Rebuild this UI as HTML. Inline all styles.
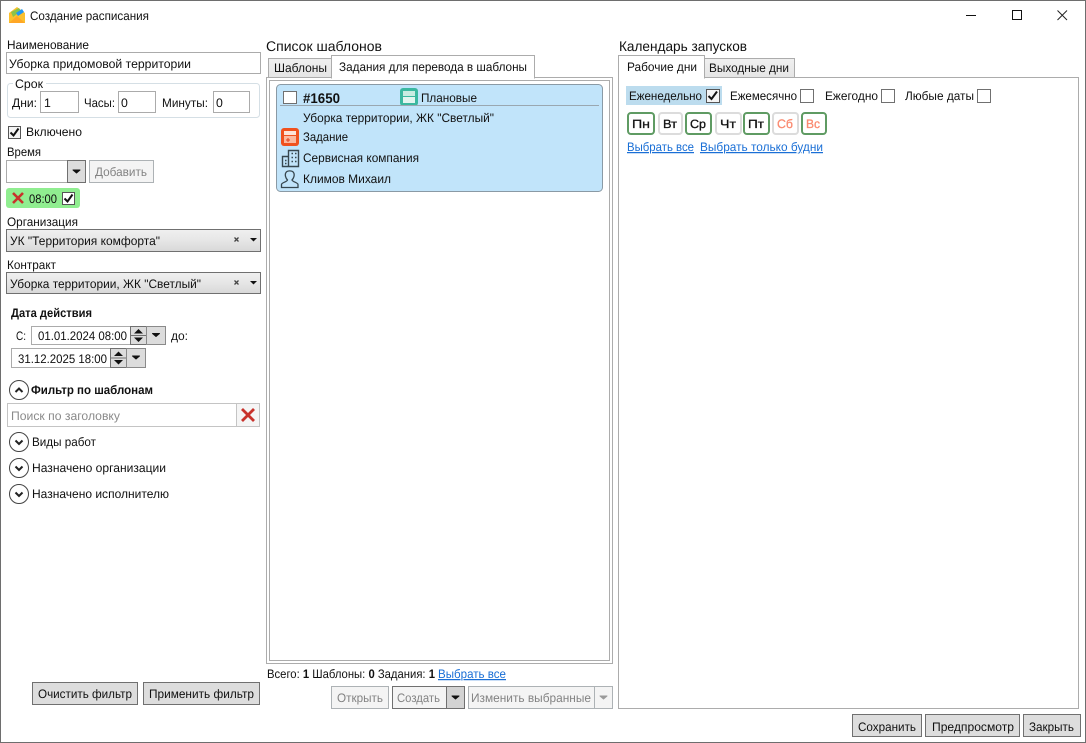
<!DOCTYPE html>
<html lang="ru"><head><meta charset="utf-8"><title>Создание расписания</title>
<style>
html,body{margin:0;padding:0;background:#fff;width:1086px;height:743px;overflow:hidden}
svg{display:block}
text{font-family:"Liberation Sans",sans-serif;font-size:12.3px;fill:#111;white-space:pre}
.h{font-size:14px}
.b{font-weight:bold}
.dis{fill:#838383}
.ph{fill:#8a8a8a}
.lnk{fill:#1a6fd6;text-decoration:underline}
.sal{fill:#fa8a70;stroke:#fa8a70;stroke-width:.3}
.day{font-size:12px;fill:#111;stroke:#111;stroke-width:.3}
</style></head><body>
<svg width="1086" height="743" viewBox="0 0 1086 743" xmlns="http://www.w3.org/2000/svg" text-rendering="geometricPrecision">
<defs>
<linearGradient id="cg" x1="0" y1="0" x2="0" y2="1"><stop offset="0" stop-color="#f0f0f0"/><stop offset=".5" stop-color="#e6e6e6"/><stop offset="1" stop-color="#d8d8d8"/></linearGradient>
<linearGradient id="tg" x1="0" y1="0" x2="0" y2="1"><stop offset="0" stop-color="#f0f0f0"/><stop offset="1" stop-color="#e5e5e5"/></linearGradient>
</defs>
<rect x=".5" y=".5" width="1085" height="742" fill="#fff" stroke="#6e6e6e"/>

<!-- title -->
<path d="M9 13 L17 7 L25 13 V23 H9Z" fill="#fbc02d"/>
<path d="M11 12 L19 8 L21 11 L13 17Z" fill="#8bc34a"/>
<path d="M16 13 L22 9 L24 12 L18 16Z" fill="#2196f3"/>
<path d="M9 23 L17 16 L25 23Z" fill="#ffa726"/>
<text x="30" y="20" textLength="119" lengthAdjust="spacingAndGlyphs">Создание расписания</text>
<path d="M966 15.5H976" stroke="#111" fill="none"/>
<rect x="1012.5" y="10.5" width="9" height="9" fill="none" stroke="#111"/>
<path d="M1057.5 10.5L1067 20M1067 10.5L1057.5 20" stroke="#222" fill="none"/>

<!-- left column -->
<text x="7" y="49" textLength="82" lengthAdjust="spacingAndGlyphs">Наименование</text>
<rect x="6.5" y="52.5" width="254" height="21" fill="#fff" stroke="#ababab"/>
<text x="9" y="68" textLength="182" lengthAdjust="spacingAndGlyphs">Уборка придомовой территории</text>

<rect x="7.5" y="83.5" width="252" height="34" rx="3" fill="#fff" stroke="#d5dfe5"/>
<rect x="13" y="80" width="33" height="6" fill="#fff"/>
<text x="15" y="88" textLength="28" lengthAdjust="spacingAndGlyphs">Срок</text>
<text x="12" y="107" textLength="25" lengthAdjust="spacingAndGlyphs">Дни:</text>
<rect x="40.5" y="91.5" width="38" height="21" fill="#fff" stroke="#ababab"/>
<text x="44" y="107">1</text>
<text x="84" y="107" textLength="31" lengthAdjust="spacingAndGlyphs">Часы:</text>
<rect x="118.5" y="91.5" width="37" height="21" fill="#fff" stroke="#ababab"/>
<text x="121" y="107">0</text>
<text x="162" y="107" textLength="46" lengthAdjust="spacingAndGlyphs">Минуты:</text>
<rect x="213.5" y="91.5" width="36" height="21" fill="#fff" stroke="#ababab"/>
<text x="216" y="107">0</text>

<rect x="8.5" y="126.5" width="12" height="12" fill="#f4f4f4" stroke="#555"/>
<path d="M10.5 132.5L13.5 135.5L18.5 128.5" fill="none" stroke="#111" stroke-width="2"/>
<text x="26" y="136" textLength="56" lengthAdjust="spacingAndGlyphs">Включено</text>

<text x="7" y="156" textLength="34" lengthAdjust="spacingAndGlyphs">Время</text>
<rect x="6.5" y="160.5" width="61" height="22" fill="#fff" stroke="#ababab"/>
<rect x="67.5" y="160.5" width="18" height="22" fill="#dcdcdc" stroke="#707070"/>
<path d="M73 170H80L76.500 173Z" fill="#111" stroke="#111" stroke-linejoin="round"/>
<rect x="89.5" y="160.5" width="64" height="22" fill="#f4f4f4" stroke="#adb2b5"/>
<text x="95" y="176" class="dis" textLength="52" lengthAdjust="spacingAndGlyphs">Добавить</text>

<rect x="6" y="188" width="74" height="20" rx="3" fill="#90ee90"/>
<path d="M13 193L23 203M23 193L13 203" stroke="#c8322b" stroke-width="2.6" fill="none"/>
<text x="29" y="203" textLength="28" lengthAdjust="spacingAndGlyphs">08:00</text>
<rect x="62.5" y="192.5" width="12" height="12" fill="#fff" stroke="#555"/>
<path d="M64.5 198.5L67.5 201.5L72.5 194.5" fill="none" stroke="#111" stroke-width="2"/>

<text x="7" y="226" textLength="71" lengthAdjust="spacingAndGlyphs">Организация</text>
<rect x="6.5" y="229.5" width="254" height="22" fill="url(#cg)" stroke="#707070"/>
<text x="10" y="245" textLength="150" lengthAdjust="spacingAndGlyphs">УК "Территория комфорта"</text>
<path d="M234.500 237.500L238.500 241.500M238.500 237.500L234.500 241.500" stroke="#444" stroke-width="1.300" fill="none"/>
<path d="M250 238H257L253.500 241.500Z" fill="#111"/>

<text x="7" y="269" textLength="49" lengthAdjust="spacingAndGlyphs">Контракт</text>
<rect x="6.500" y="272.500" width="254" height="21" fill="url(#cg)" stroke="#707070"/>
<text x="10" y="288" textLength="191" lengthAdjust="spacingAndGlyphs">Уборка территории, ЖК "Светлый"</text>
<path d="M234.500 280.500L238.500 284.500M238.500 280.500L234.500 284.500" stroke="#444" stroke-width="1.300" fill="none"/>
<path d="M250 281H257L253.500 284.500Z" fill="#111"/>

<text x="11" y="317" class="b" textLength="81" lengthAdjust="spacingAndGlyphs">Дата действия</text>
<text x="16" y="340" textLength="10" lengthAdjust="spacingAndGlyphs">С:</text>
<rect x="31.500" y="326.500" width="99" height="18" fill="#fff" stroke="#ababab"/>
<text x="38" y="340" textLength="89" lengthAdjust="spacingAndGlyphs">01.01.2024 08:00</text>
<rect x="130.500" y="326.500" width="16" height="18" fill="#dcdcdc" stroke="#707070"/>
<path d="M130.500 335.500H146.500" stroke="#707070"/>
<path d="M134 333.500L138.500 329L143 333.500Z M134 337.500H143L138.500 342Z" fill="#111"/>
<rect x="146.500" y="326.500" width="19" height="18" fill="#dcdcdc" stroke="#8a8a8a"/>
<path d="M152.500 333.500H159.500L156 336.500Z" fill="#111" stroke="#111" stroke-linejoin="round"/>
<text x="171" y="340" textLength="17" lengthAdjust="spacingAndGlyphs">до:</text>

<rect x="11.500" y="348.500" width="99" height="19" fill="#fff" stroke="#ababab"/>
<text x="18" y="363" textLength="89" lengthAdjust="spacingAndGlyphs">31.12.2025 18:00</text>
<rect x="110.500" y="348.500" width="16" height="19" fill="#dcdcdc" stroke="#707070"/>
<path d="M110.500 358H126.500" stroke="#707070"/>
<path d="M114 356L118.500 351.500L123 356Z M114 360H123L118.500 364.500Z" fill="#111"/>
<rect x="126.500" y="348.500" width="19" height="19" fill="#dcdcdc" stroke="#8a8a8a"/>
<path d="M132.500 356H139.500L136 359Z" fill="#111" stroke="#111" stroke-linejoin="round"/>

<circle cx="19" cy="390" r="9.500" fill="#fff" stroke="#444"/>
<path d="M15.500 392L19 388.500L22.500 392" fill="none" stroke="#222" stroke-width="2"/>
<text x="31" y="394" class="b" textLength="122" lengthAdjust="spacingAndGlyphs">Фильтр по шаблонам</text>

<rect x="7.500" y="403.500" width="229" height="23" fill="#fff" stroke="#c4c4c4"/>
<text x="11" y="420" class="ph" textLength="109" lengthAdjust="spacingAndGlyphs">Поиск по заголовку</text>
<rect x="236.500" y="403.500" width="23" height="23" fill="#f5f5f5" stroke="#c4c4c4"/>
<path d="M242 409L254 421M254 409L242 421" stroke="#c8322b" stroke-width="2.800" fill="none"/>

<circle cx="19" cy="442" r="9.500" fill="#fff" stroke="#444"/>
<path d="M15.500 440.500L19 444L22.500 440.500" fill="none" stroke="#222" stroke-width="2"/>
<text x="32" y="446" textLength="64" lengthAdjust="spacingAndGlyphs">Виды работ</text>
<circle cx="19" cy="468" r="9.500" fill="#fff" stroke="#444"/>
<path d="M15.500 466.500L19 470L22.500 466.500" fill="none" stroke="#222" stroke-width="2"/>
<text x="32" y="472" textLength="134" lengthAdjust="spacingAndGlyphs">Назначено организации</text>
<circle cx="19" cy="494" r="9.500" fill="#fff" stroke="#444"/>
<path d="M15.500 492.500L19 496L22.500 492.500" fill="none" stroke="#222" stroke-width="2"/>
<text x="32" y="498" textLength="137" lengthAdjust="spacingAndGlyphs">Назначено исполнителю</text>

<rect x="32.500" y="682.500" width="105" height="22" fill="#dddddd" stroke="#707070"/>
<text x="38" y="698" textLength="94" lengthAdjust="spacingAndGlyphs">Очистить фильтр</text>
<rect x="143.500" y="682.500" width="116" height="22" fill="#dddddd" stroke="#707070"/>
<text x="149" y="698" textLength="105" lengthAdjust="spacingAndGlyphs">Применить фильтр</text>

<!-- middle column -->
<text x="266" y="51" class="h" textLength="116" lengthAdjust="spacingAndGlyphs">Список шаблонов</text>
<rect x="266.500" y="77.500" width="346" height="586" fill="#fff" stroke="#acacac"/>
<rect x="268.500" y="58.500" width="63" height="19" fill="url(#tg)" stroke="#acacac"/>
<text x="274" y="72" textLength="53" lengthAdjust="spacingAndGlyphs">Шаблоны</text>
<rect x="331.500" y="55.500" width="203" height="22.500" fill="#fff" stroke="#acacac"/>
<rect x="332" y="76" width="202" height="3" fill="#fff"/>
<text x="339" y="71" textLength="188" lengthAdjust="spacingAndGlyphs">Задания для перевода в шаблоны</text>
<rect x="269.500" y="80.500" width="340" height="580" fill="#fff" stroke="#acacac"/>

<rect x="276.500" y="84.500" width="326" height="107" rx="4" fill="#c1e4fa" stroke="#8a9aa5"/>
<rect x="283.500" y="91.500" width="13" height="12" fill="#fff" stroke="#707070"/>
<text x="303" y="103" class="b" style="font-size:14px" textLength="37" lengthAdjust="spacingAndGlyphs">#1650</text>
<rect x="400" y="88" width="18" height="18" rx="3" fill="#3bb8a0"/>
<rect x="403" y="91" width="12" height="5" fill="#c9ece2"/>
<rect x="403" y="97" width="12" height="6" fill="#e2f5ef"/>
<text x="421" y="102" textLength="56" lengthAdjust="spacingAndGlyphs">Плановые</text>
<path d="M280 105.500H599" stroke="#9aa7b0"/>
<text x="303" y="122" textLength="191" lengthAdjust="spacingAndGlyphs">Уборка территории, ЖК "Светлый"</text>
<rect x="281" y="128" width="18" height="18" rx="3" fill="#f0511e"/>
<rect x="284" y="131" width="12" height="4" fill="#fde3d8"/>
<rect x="284" y="136" width="12" height="7" fill="#fbb9a0"/>
<path d="M286 140H290M288 138V142" stroke="#e0401a"/>
<text x="303" y="141" textLength="45" lengthAdjust="spacingAndGlyphs">Задание</text>
<path d="M282.500 166.500V156.500H288.500V150.500H298.500V166.500Z M288.500 156.500V166.500" fill="none" stroke="#37474f" stroke-width="1.400"/>
<path d="M285 160.500h1.500M285 163.500h1.500M291.500 153.500h1.500M295 153.500h1.500M291.500 157.500h1.500M295 157.500h1.500M291.500 161.500h1.500M295 161.500h1.500" stroke="#37474f" stroke-width="1.500"/>
<text x="303" y="162" textLength="116" lengthAdjust="spacingAndGlyphs">Сервисная компания</text>
<path d="M281.500 187.500V184.500C281.500 182.500 287 182 287.500 180C285.500 178 285 175 285.500 173.500C286.500 170 293 170 294 173.500C294.500 175 294 178 292 180C292.500 182 298 182.500 298 184.500V187.500Z" fill="none" stroke="#37474f" stroke-width="1.300"/>
<text x="303" y="183" textLength="88" lengthAdjust="spacingAndGlyphs">Климов Михаил</text>

<text x="267" y="678" textLength="168" lengthAdjust="spacingAndGlyphs">Всего: <tspan font-weight="bold">1</tspan> Шаблоны: <tspan font-weight="bold">0</tspan> Задания: <tspan font-weight="bold">1</tspan></text>
<text x="438" y="678" class="lnk" textLength="68" lengthAdjust="spacingAndGlyphs">Выбрать все</text>

<rect x="331.500" y="686.500" width="57" height="22" fill="#f4f4f4" stroke="#adb2b5"/>
<text x="337" y="702" class="dis" textLength="46" lengthAdjust="spacingAndGlyphs">Открыть</text>
<rect x="392.500" y="686.500" width="54" height="22" fill="#f4f4f4" stroke="#707070"/>
<text x="397" y="702" class="dis" textLength="43" lengthAdjust="spacingAndGlyphs">Создать</text>
<rect x="446.500" y="686.500" width="18" height="22" fill="#d3d3d3" stroke="#707070"/>
<path d="M452 696H459L455.500 699Z" fill="#111" stroke="#111" stroke-linejoin="round"/>
<rect x="468.500" y="686.500" width="126" height="22" fill="#f4f4f4" stroke="#adb2b5"/>
<text x="471" y="702" class="dis" textLength="120" lengthAdjust="spacingAndGlyphs">Изменить выбранные</text>
<rect x="594.500" y="686.500" width="18" height="22" fill="#f4f4f4" stroke="#adb2b5"/>
<path d="M600 696H607L603.500 699Z" fill="#9a9a9a" stroke="#9a9a9a" stroke-linejoin="round"/>

<!-- right column -->
<text x="619" y="51" class="h" textLength="128" lengthAdjust="spacingAndGlyphs">Календарь запусков</text>
<rect x="618.500" y="77.500" width="460" height="631" fill="#fff" stroke="#acacac"/>
<rect x="704.500" y="58.500" width="90" height="19" fill="url(#tg)" stroke="#acacac"/>
<text x="709" y="72" textLength="80" lengthAdjust="spacingAndGlyphs">Выходные дни</text>
<rect x="618.500" y="55.500" width="86" height="22.500" fill="#fff" stroke="#acacac"/>
<rect x="619" y="76" width="85" height="3" fill="#fff"/>
<text x="627" y="71" textLength="70" lengthAdjust="spacingAndGlyphs">Рабочие дни</text>

<rect x="626" y="86" width="96" height="19" fill="#bcdcee"/>
<text x="629" y="100" textLength="73" lengthAdjust="spacingAndGlyphs">Еженедельно</text>
<rect x="706.500" y="89.500" width="13" height="13" fill="#f4f4f4" stroke="#555"/>
<path d="M708.500 96L711.500 99L717 91.500" fill="none" stroke="#111" stroke-width="2"/>
<text x="730" y="100" textLength="67" lengthAdjust="spacingAndGlyphs">Ежемесячно</text>
<rect x="800.500" y="89.500" width="13" height="13" fill="#fff" stroke="#707070"/>
<text x="825" y="100" textLength="53" lengthAdjust="spacingAndGlyphs">Ежегодно</text>
<rect x="881.500" y="89.500" width="13" height="13" fill="#fff" stroke="#707070"/>
<text x="905" y="100" textLength="69" lengthAdjust="spacingAndGlyphs">Любые даты</text>
<rect x="977.500" y="89.500" width="13" height="13" fill="#fff" stroke="#707070"/>

<g fill="#fff" stroke-width="2">
<rect x="628" y="113" width="26" height="21" rx="3" stroke="#5f9b63"/>
<rect x="659" y="113" width="23" height="21" rx="3" stroke="#dcdcdc"/>
<rect x="686" y="113" width="25" height="21" rx="3" stroke="#5f9b63"/>
<rect x="716" y="113" width="25" height="21" rx="3" stroke="#dcdcdc"/>
<rect x="744" y="113" width="25" height="21" rx="3" stroke="#5f9b63"/>
<rect x="773" y="113" width="25" height="21" rx="3" stroke="#dcdcdc"/>
<rect x="802" y="113" width="24" height="21" rx="3" stroke="#5f9b63"/>
</g>
<text x="632" y="128" class="day" textLength="18" lengthAdjust="spacingAndGlyphs">Пн</text>
<text x="663" y="128" class="day" textLength="14" lengthAdjust="spacingAndGlyphs">Вт</text>
<text x="690" y="128" class="day" textLength="16" lengthAdjust="spacingAndGlyphs">Ср</text>
<text x="720" y="128" class="day" textLength="16" lengthAdjust="spacingAndGlyphs">Чт</text>
<text x="748" y="128" class="day" textLength="16" lengthAdjust="spacingAndGlyphs">Пт</text>
<text x="777" y="128" class="sal" textLength="16" lengthAdjust="spacingAndGlyphs">Сб</text>
<text x="806" y="128" class="sal" textLength="14" lengthAdjust="spacingAndGlyphs">Вс</text>
<text x="627" y="151" class="lnk" textLength="67" lengthAdjust="spacingAndGlyphs">Выбрать все</text>
<text x="700" y="151" class="lnk" textLength="123" lengthAdjust="spacingAndGlyphs">Выбрать только будни</text>

<rect x="852.500" y="714.500" width="69" height="22" fill="#dddddd" stroke="#707070"/>
<text x="858" y="731" textLength="58" lengthAdjust="spacingAndGlyphs">Сохранить</text>
<rect x="925.500" y="714.500" width="94" height="22" fill="#dddddd" stroke="#707070"/>
<text x="932" y="731" textLength="82" lengthAdjust="spacingAndGlyphs">Предпросмотр</text>
<rect x="1023.500" y="714.500" width="57" height="22" fill="#dddddd" stroke="#707070"/>
<text x="1029" y="731" textLength="45" lengthAdjust="spacingAndGlyphs">Закрыть</text>
</svg>
</body></html>
